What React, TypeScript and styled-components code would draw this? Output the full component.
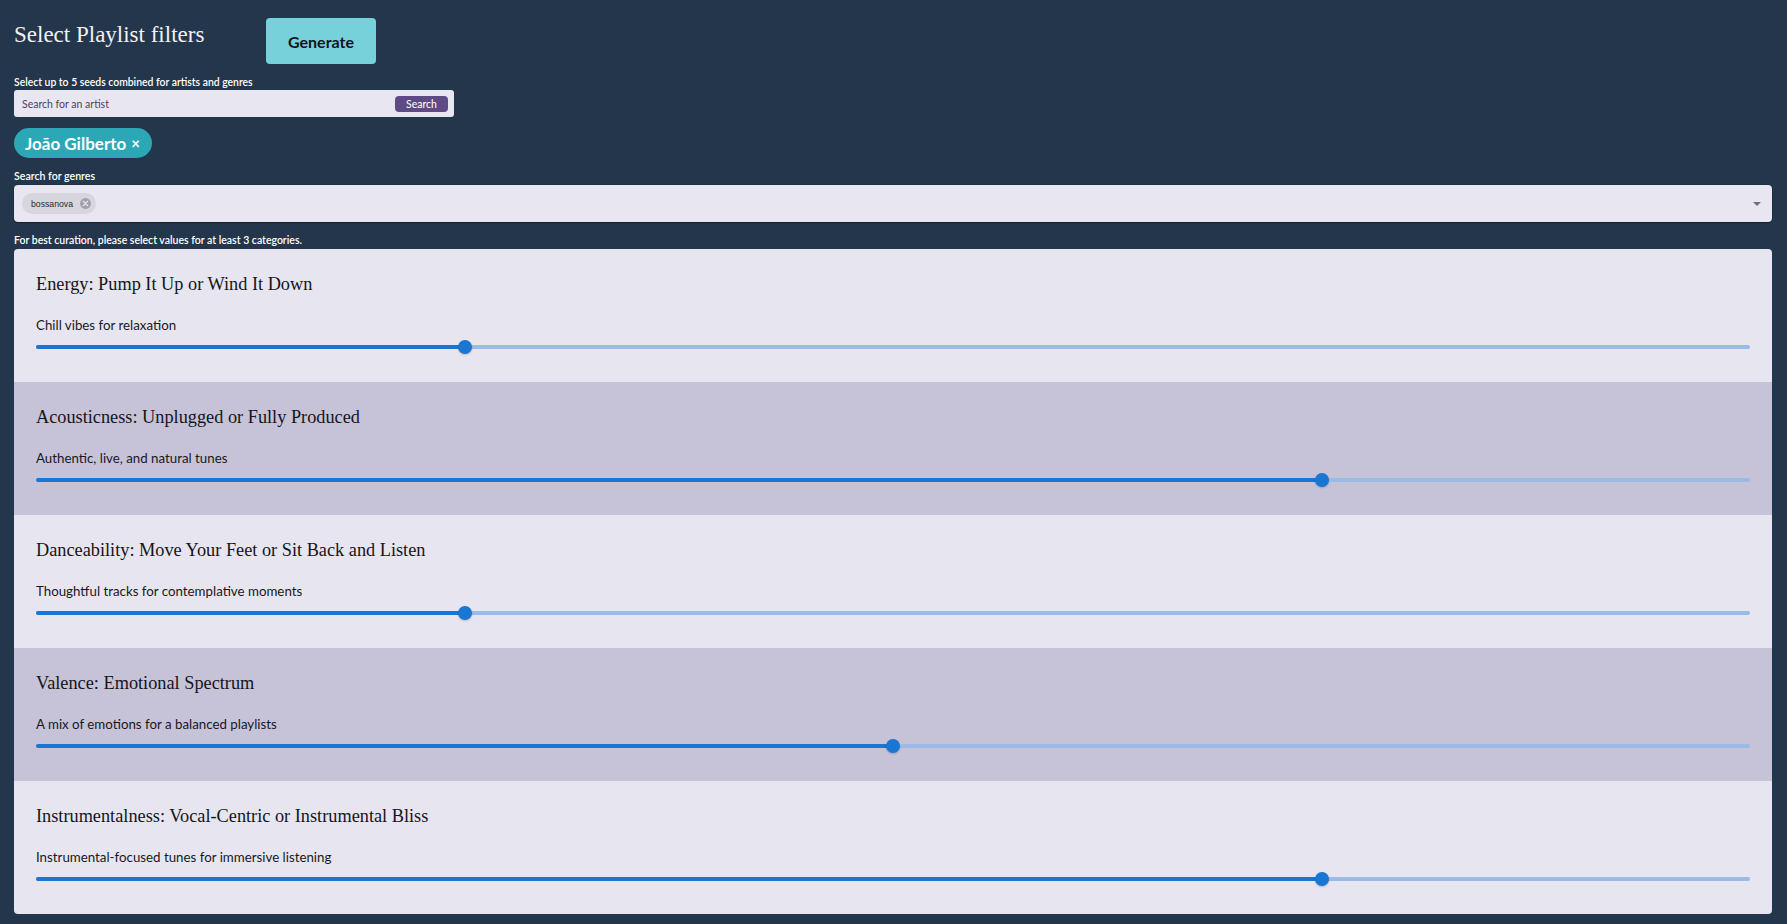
import React from "react";
import styled, { createGlobalStyle } from "styled-components";

const GlobalStyle = createGlobalStyle`
  html, body {
    margin: 0;
    padding: 0;
    background: #23364b;
  }
  body {
    font-family: Lato, "Noto Sans", sans-serif;
    -webkit-font-smoothing: antialiased;
  }
  * { box-sizing: border-box; }
`;

const Page = styled.div`
  min-height: 924px;
  padding: 18px 15px 11px 14px;
  display: flex;
  flex-direction: column;
`;

const Header = styled.div`
  display: grid;
  grid-template-columns: 252px auto;
  align-items: start;
`;

const Title = styled.h1`
  margin: 2px 0 0 0;
  font-family: "Liberation Serif", "DejaVu Serif", serif;
  font-weight: 400;
  font-size: 23px;
  line-height: 30px;
  color: #f2f1f6;
  white-space: nowrap;
`;

const GenerateButton = styled.button`
  width: 110px;
  height: 46px;
  border: none;
  border-radius: 4px;
  background: #76d1db;
  color: #111418;
  font-family: Lato, sans-serif;
  font-weight: 700;
  font-size: 16px;
  cursor: pointer;
  padding: 0;
`;

const Hint = styled.div<{ $mt?: number; $size?: number }>`
  margin-top: ${(p) => p.$mt ?? 0}px;
  font-size: ${(p) => p.$size ?? 10.4}px;
  line-height: 12px;
  color: #ffffff;
  font-weight: 600;
`;

const SearchBar = styled.div`
  margin-top: 2px;
  width: 440px;
  height: 27px;
  background: #e8e6f0;
  border-radius: 3px;
  display: flex;
  align-items: center;
  padding: 0 6px 0 8px;
`;

const SearchInput = styled.input`
  flex: 1;
  border: none;
  outline: none;
  background: transparent;
  font-family: Lato, sans-serif;
  font-size: 10.5px;
  color: #3b3548;
  padding: 0;
  &::placeholder {
    color: #4b4458;
  }
`;

const SearchButton = styled.button`
  width: 53px;
  height: 16px;
  border: none;
  border-radius: 4px;
  background: #5e4b85;
  color: #ffffff;
  font-family: Lato, sans-serif;
  font-size: 10.5px;
  padding: 0;
  line-height: 16px;
`;

const ArtistChip = styled.div`
  margin-top: 11px;
  align-self: flex-start;
  height: 30px;
  border-radius: 15px;
  background: #2ba7b6;
  color: #ffffff;
  font-weight: 700;
  font-size: 17px;
  display: flex;
  align-items: center;
  padding: 0 12px 0 11px;
  gap: 5px;
`;

const ChipClose = styled.span`
  font-size: 15px;
  font-weight: 700;
`;

const GenreBox = styled.div`
  margin-top: 3px;
  height: 37px;
  background: #e8e6f0;
  border-radius: 4px;
  box-shadow: 0 1px 1px rgba(0, 0, 0, 0.35), 0 0 0 0.5px rgba(0, 0, 0, 0.15);
  display: flex;
  align-items: center;
  padding: 0 11px 0 8px;
`;

const GenreChip = styled.div`
  height: 21px;
  border-radius: 11px;
  background: #d7d5de;
  display: flex;
  align-items: center;
  padding: 0 4px 0 9px;
  gap: 6px;
  font-family: "Liberation Sans", Arial, sans-serif;
  font-size: 8.7px;
  color: #2b2b2b;
`;

const Caret = styled.div`
  margin-left: auto;
  width: 0;
  height: 0;
  border-left: 4px solid transparent;
  border-right: 4px solid transparent;
  border-top: 4px solid #707070;
`;

const Panel = styled.div`
  margin-top: 3px;
  border-radius: 4px;
  overflow: hidden;
  display: flex;
  flex-direction: column;
`;

const Section = styled.section<{ $shade: boolean }>`
  background: ${(p) => (p.$shade ? "#c6c3d9" : "#e7e6f0")};
  padding: 22px 22px 29px 22px;
  height: 133px;
`;

const SectionTitle = styled.h2`
  margin: 0;
  font-family: "Liberation Serif", "DejaVu Serif", serif;
  font-weight: 400;
  font-size: 18.3px;
  line-height: 26px;
  color: #151518;
`;

const SectionSub = styled.div`
  margin-top: 18px;
  font-size: 13.3px;
  line-height: 20px;
  color: #18181c;
`;

const SliderRoot = styled.div`
  position: relative;
  margin-top: 5px;
  height: 14px;
  display: flex;
  align-items: center;
`;

const Rail = styled.div`
  position: relative;
  width: 100%;
  height: 4px;
  border-radius: 2px;
  background: #99bbe5;
`;

const Track = styled.div`
  position: absolute;
  left: 0;
  top: 0;
  height: 4px;
  border-radius: 2px;
  background: #1976d2;
`;

const Thumb = styled.div`
  position: absolute;
  top: 50%;
  width: 14px;
  height: 14px;
  border-radius: 50%;
  background: #1976d2;
  transform: translate(-50%, -50%);
  box-shadow: 0 1px 2px rgba(0, 0, 0, 0.2);
`;

const Slider: React.FC<{ value: number }> = ({ value }) => (
  <SliderRoot>
    <Rail>
      <Track style={{ width: `${value}%` }} />
      <Thumb style={{ left: `${value}%` }} />
    </Rail>
  </SliderRoot>
);

const CancelIcon = () => (
  <svg width="13" height="13" viewBox="0 0 24 24">
    <circle cx="12" cy="12" r="10" fill="#a19fa7" />
    <path d="M8 8 L16 16 M16 8 L8 16" stroke="#e3e1e8" strokeWidth="2.4" strokeLinecap="round" />
  </svg>
);

const filters = [
  {
    title: "Energy: Pump It Up or Wind It Down",
    sub: "Chill vibes for relaxation",
    value: 25,
  },
  {
    title: "Acousticness: Unplugged or Fully Produced",
    sub: "Authentic, live, and natural tunes",
    value: 75,
  },
  {
    title: "Danceability: Move Your Feet or Sit Back and Listen",
    sub: "Thoughtful tracks for contemplative moments",
    value: 25,
  },
  {
    title: "Valence: Emotional Spectrum",
    sub: "A mix of emotions for a balanced playlists",
    value: 50,
  },
  {
    title: "Instrumentalness: Vocal-Centric or Instrumental Bliss",
    sub: "Instrumental-focused tunes for immersive listening",
    value: 75,
  },
];

export default function App() {
  return (
    <>
      <GlobalStyle />
      <Page>
        <Header>
          <Title>Select Playlist filters</Title>
          <GenerateButton>Generate</GenerateButton>
        </Header>
        <Hint $mt={12}>Select up to 5 seeds combined for artists and genres</Hint>
        <SearchBar>
          <SearchInput placeholder="Search for an artist" />
          <SearchButton>Search</SearchButton>
        </SearchBar>
        <ArtistChip>
          João Gilberto <ChipClose>×</ChipClose>
        </ArtistChip>
        <Hint $mt={12} $size={10.6}>Search for genres</Hint>
        <GenreBox>
          <GenreChip>
            bossanova
            <CancelIcon />
          </GenreChip>
          <Caret />
        </GenreBox>
        <Hint $mt={12} $size={10.5}>
          For best curation, please select values for at least 3 categories.
        </Hint>
        <Panel>
          {filters.map((f, i) => (
            <Section key={f.title} $shade={i % 2 === 1}>
              <SectionTitle>{f.title}</SectionTitle>
              <SectionSub>{f.sub}</SectionSub>
              <Slider value={f.value} />
            </Section>
          ))}
        </Panel>
      </Page>
    </>
  );
}
